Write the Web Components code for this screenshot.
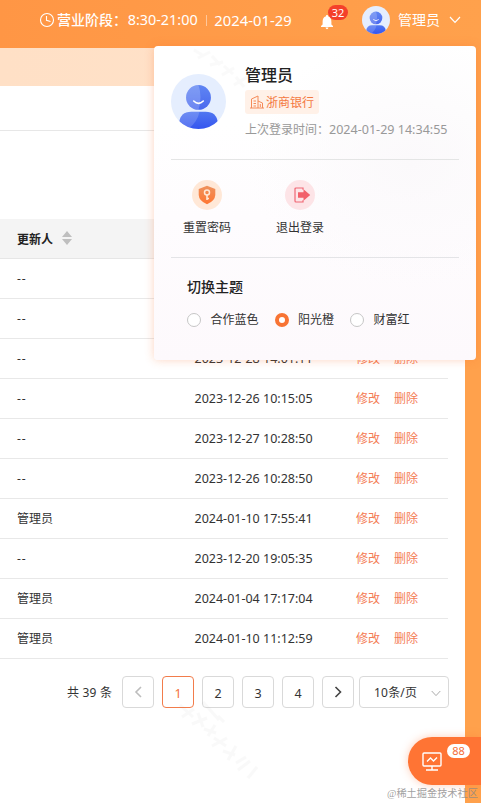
<!DOCTYPE html>
<html lang="zh-CN">
<head>
<meta charset="utf-8">
<title>管理后台</title>
<style>
html,body{margin:0;height:100%;overflow:hidden}
body{font-family:"Noto Sans","Noto Sans CJK SC",sans-serif;font-size:12px;color:#333}
</style>
</head>
<body>
<admin-page></admin-page>
<script>
const define=(name,html)=>customElements.define(name,class extends HTMLElement{
  constructor(){
    super();
    const root=this.attachShadow({mode:'open'});
    const t=document.createElement('template');
    t.innerHTML=typeof html==='function'?html(this):html;
    root.append(t.content.cloneNode(true));
  }
});

define('user-avatar',`<style>:host{display:block;flex:none}svg{display:block;width:100%;height:100%}</style>
<svg viewBox="0 0 54 54"><defs>
<linearGradient id="h" x1="0" y1="0" x2="0" y2="1"><stop stop-color="#5f85f3"/><stop offset="1" stop-color="#4a69ee"/></linearGradient>
<linearGradient id="b" x1="0" y1="0" x2="0" y2="1"><stop stop-color="#5077f1"/><stop offset="1" stop-color="#3555ef"/></linearGradient>
<clipPath id="c"><circle cx="27" cy="27" r="27"/></clipPath></defs>
<circle cx="27" cy="27" r="27" fill="#e5eefe"/>
<g clip-path="url(#c)"><path d="M8 54V48Q9 37 20 37H34Q45 37 46 48V54Z" fill="url(#b)"/><path d="M8 54V48Q9 37 20 37H28Q26 47 17 54Z" fill="#fff" opacity=".17"/></g>
<circle cx="27" cy="23" r="12.2" fill="url(#h)"/><path d="M27 10.8A12.2 12.2 0 0 0 27 35.2Q31 23 27 10.8Z" fill="#fff" opacity=".2"/>
<path d="M22.3 26.5Q27 31 31.7 26.5" fill="none" stroke="#fff" stroke-width="1.6" stroke-linecap="round"/></svg>`);

define('top-bar',`<style>
:host{display:flex;align-items:center;box-sizing:border-box;height:48px;padding:0 20px 8px 39px;color:#fff;font-size:14px;line-height:20px;background:linear-gradient(90deg,#ff9645,#ffa14c);white-space:nowrap}
svg{display:block;flex:none;fill:none;stroke:#fff}
.label{margin-left:2px;width:71px;font-weight:500}.hours{font-size:14.4px;width:72px}
.sep{width:1px;height:11px;background:#ffc79b;margin:0 7px}.date{font-size:14.8px;width:79px}
.bell{position:relative;width:14px;margin-left:27px}
.count{position:absolute;left:8px;top:-6px;width:20px;height:15px;border-radius:8px;background:#f4402b;font-size:11px;line-height:15px;text-align:center}
user-avatar{width:28px;height:28px;margin-left:28px}.name{margin:0 9px 0 8px;width:42px}
</style>
<svg width="16" height="16" viewBox="0 0 16 16" stroke-width="1.1"><circle cx="8" cy="8" r="6.5"/><path d="M7.5 4V8.3L11.5 9.5"/></svg>
<span class="label">营业阶段：</span><span class="hours">8:30-21:00</span><span class="sep"></span><span class="date">2024-01-29</span>
<span class="bell"><svg width="14" height="16" viewBox="0 0 14 16" style="margin-top:3px"><path d="M7 1C8 1 8 1.7 8 2.2C10.5 2.9 11.4 5 11.4 8V10.5L13 12V13H1V12L2.6 10.5V8C2.6 5 3.5 2.9 6 2.2C6 1.7 6 1 7 1ZM5.5 13.6H8.5Q8 15.3 7 15.3T5.5 13.6Z" fill="#fff" stroke="none"/></svg><span class="count">32</span></span>
<user-avatar></user-avatar><span class="name">管理员</span>
<svg width="12" height="8" viewBox="0 0 12 8" stroke-width="1.2"><path d="M1 1L6 6.3L11 1"/></svg>`);

define('table-row',e=>{
  const who=e.getAttribute('who'),time=e.getAttribute('time');
  return `<style>
:host{display:grid;grid-template-columns:194.5px 161.5px 38px 1fr;box-sizing:border-box;height:40px;width:448px;line-height:39px;border-bottom:1px solid #e8e8e8;white-space:nowrap}
.who{padding-left:17px}.none{letter-spacing:.8px}.time{font-size:12.5px}a{color:#f47c55}
</style><span class="who${who==='--'?' none':''}">${who}</span>${time?`<span class="time">${time}</span><a>修改</a><a>删除</a>`:''}`;
});

define('data-table',`<style>
:host{display:block}
header{display:flex;align-items:center;gap:9px;box-sizing:border-box;width:465px;height:40px;padding-left:17px;background:#f4f4f4;border-bottom:1px solid #e6e6e6;color:#222;font-weight:700}
header{width:448px}
svg{fill:#bfbfbf;margin-top:-2px}
</style><header>更新人<svg width="10" height="14" viewBox="0 0 10 14"><path d="M5 0L10 6H0ZM5 14L0 8H10Z"/></svg></header>
${[['--',''],['--',''],['--','2023-12-28 14:01:11'],['--','2023-12-26 10:15:05'],['--','2023-12-27 10:28:50'],['--','2023-12-26 10:28:50'],['管理员','2024-01-10 17:55:41'],['--','2023-12-20 19:05:35'],['管理员','2024-01-04 17:17:04'],['管理员','2024-01-10 11:12:59']].map(r=>`<table-row who="${r[0]}" time="${r[1]}"></table-row>`).join('')}`);

define('page-button',`<style>
:host{display:flex;align-items:center;justify-content:center;box-sizing:border-box;width:32px;height:32px;border:1px solid #d9d9d9;border-radius:4px;font-size:12.5px;line-height:16px;padding-top:3px}
:host([active]){border-color:#f27c4b;color:#f4703c}
::slotted(svg){display:block;margin-top:-4px}
</style><slot></slot>`);

define('table-pager',`<style>
:host{display:flex;align-items:center;gap:8px;height:32px;padding:17px 0 0 67px;white-space:nowrap}
.total{width:47px;letter-spacing:.2px}
svg{fill:none;stroke:#444;stroke-width:1.6}
.size{display:flex;align-items:center;justify-content:space-between;box-sizing:border-box;width:90px;height:32px;margin-left:-3px;padding:0 7px 0 14px;border:1px solid #d9d9d9;border-radius:4px;letter-spacing:.2px}
</style>
<span class="total">共 39 条</span>
<page-button><svg width="10" height="14" viewBox="0 0 10 14" style="stroke:#bdbdbd"><path d="M8 2L3 7L8 12"/></svg></page-button>
<page-button active>1</page-button><page-button>2</page-button><page-button>3</page-button><page-button>4</page-button>
<page-button><svg width="10" height="14" viewBox="0 0 10 14"><path d="M2.5 2L7.5 7L2.5 12"/></svg></page-button>
<span class="size"><span>10条/页</span><svg width="10" height="7" viewBox="0 0 10 7" style="stroke:#aaa;stroke-width:1;margin-top:2px"><path d="M.7 1L5 5.6L9.3 1"/></svg></span>`);

define('quick-action',`<style>
:host{display:flex;flex-direction:column;align-items:center;width:48px;gap:10px;line-height:16px;white-space:nowrap}
.disc{display:flex;align-items:center;justify-content:center;width:30px;height:30px;border-radius:50%;background:var(--disc)}
</style><span class="disc"><slot name="icon"></slot></span><slot></slot>`);

define('theme-option',`<style>
:host{display:flex;align-items:center;gap:9.5px;line-height:16px;white-space:nowrap}
i{box-sizing:border-box;width:14px;height:14px;border:1px solid #c6c6c6;border-radius:50%;background:#fff}
:host([checked]) i{border:4px solid #f87434}
</style><i></i><slot></slot>`);

define('user-panel',`<style>
:host{display:block;box-sizing:border-box;width:322px;height:314px;padding:0 17px;border-radius:4px;background:radial-gradient(ellipse at 80% 37%,#fbf9fb 0,transparent 45%),linear-gradient(180deg,#fff 25%,#fefcfe 55%,#fdf9fc);box-shadow:0 0 10px rgba(248,112,48,.3);white-space:nowrap}
.profile{display:flex;gap:19px;box-sizing:border-box;height:114px;padding-top:18px;border-bottom:1px solid #e4e5e5}
user-avatar{width:55px;height:55px;margin-top:10px}
h1{margin:0;font-size:16px;line-height:22px;font-weight:500;color:#222}
.bank{display:flex;align-items:center;gap:2px;box-sizing:border-box;width:74px;height:24px;margin-top:4px;padding-left:5px;border-radius:3px;background:#fff1e8;color:#f47840}
.last{display:flex;margin-top:8px;line-height:16px;color:#999}.last b{font-weight:400;font-size:12.55px;margin-left:1px}
.last span{width:83px}
.actions{display:flex;gap:45px;box-sizing:border-box;height:98px;padding:20px 12px 0;border-bottom:1px solid #e4e4e7}
quick-action+quick-action{--disc:#fde4e7}quick-action{--disc:#ffe8d7}
h2{margin:19px 0 0 16px;font-size:14px;line-height:20px;font-weight:500;color:#222}
.themes{display:flex;gap:16px;padding:15px 0 0 16px}
.watermark{position:absolute;left:0;top:0;pointer-events:none}
</style>
<svg class="watermark" width="110" height="55" fill="none" stroke="#888" opacity=".035" stroke-width="3"><path d="M40 4l10 6M44 12l12-6M58 10l8 9M56 19l13-3M70 20l9 8M68 29l12-7M82 31l8 10M80 39l13-8"/></svg>
<section class="profile"><user-avatar></user-avatar><div><h1>管理员</h1>
<div class="bank"><svg width="14" height="14" viewBox="0 0 14 14" fill="none" stroke="#f58a58"><path d="M1.5 13V4L8 1V13M0 13H14M8 6L12.5 8V13M3.5 6H6M3.5 8.5H6M3.5 11H6M10.3 9V12"/></svg>浙商银行</div>
<div class="last"><span>上次登录时间：</span><b>2024-01-29 14:34:55</b></div></div></section>
<section class="actions">
<quick-action><svg slot="icon" width="18" height="20" viewBox="0 0 18 20"><defs><linearGradient id="s" x2="0" y2="1"><stop stop-color="#ee925d"/><stop offset="1" stop-color="#ff7631"/></linearGradient></defs><path d="M9 .8L17.3 4V10Q17 16 9 19.2Q1 16 .7 10V4Z" fill="url(#s)"/><circle cx="9" cy="7.5" r="2.5" fill="none" stroke="#ffe7d6" stroke-width="1.5"/><path d="M9 10V15M9 13.5H11" stroke="#ffe7d6" stroke-width="1.6"/></svg>重置密码</quick-action>
<quick-action><svg slot="icon" width="18" height="16" viewBox="0 0 18 16" style="margin-left:3px"><path d="M10 2.8V1H3Q2 1 2 2V14Q2 15 3 15H10V13.2" fill="none" stroke="#f06774" stroke-width="1.2"/><path d="M5 5.2H10.5V2.3L17.2 8L10.5 13.7V10.8H5Z" fill="#f2606a"/></svg>退出登录</quick-action></section>
<h2>切换主题</h2><div class="themes"><theme-option>合作蓝色</theme-option><theme-option checked>阳光橙</theme-option><theme-option>财富红</theme-option></div>`);

define('monitor-button',`<style>
:host{display:flex;box-sizing:border-box;width:73px;height:48px;padding:15px 0 0 14px;border-radius:24px 0 0 24px;background:#ff7434;box-shadow:0 0 8px rgba(255,116,52,.35)}
span{width:23px;height:14px;margin:-8px 0 0 5px;border-radius:7px;background:#fff;color:#f46d38;font-size:11px;line-height:14px;text-align:center}
</style><svg width="20" height="19" viewBox="0 0 20 19" fill="none" stroke="#fff" stroke-width="1.4"><rect x="1" y="1" width="18" height="13" rx="1"/><path d="M5 9.5L8.5 6L11.5 9L15 5.5M10 14V18M4 18H16"/></svg><span>88</span>`);

define('admin-page',`<style>
:host{display:block;position:relative;width:481px;height:803px;overflow:hidden;background:#ffa14c}
main{display:flex;flex-direction:column;width:465px;height:755px;background:#fff}
.tabs{width:465px;height:38px;background:linear-gradient(90deg,#ffe0c6,#ffe2ca)}
.toolbar{height:44px;border-bottom:1px solid #e7e7e7}
data-table{margin-top:88px}
user-panel{position:absolute;left:154px;top:46px}
monitor-button{position:absolute;right:0;top:737px}
.credit{position:absolute;left:387px;top:787px;color:rgba(135,135,135,.8);font:10.2px/14px "Liberation Serif","Noto Sans CJK SC",serif;white-space:nowrap}
.watermark{position:absolute;left:170px;top:695px;pointer-events:none}
</style>
<top-bar></top-bar>
<main><div class="tabs"></div><div class="toolbar"></div><data-table></data-table><table-pager></table-pager></main>
<svg class="watermark" width="95" height="90" fill="none" stroke="#888" opacity=".045" stroke-width="3"><path d="M10 10l13 12M12 22l12-8M28 18l5 14M22 29l15-6M34 34l12 4M38 41l7-11M44 43l12 8M42 51l15-8M53 56l12 4M58 65l8-14M66 68l10-6M68 75l12-9M78 83l9-11M33 7l16 18M48 21l6 6"/></svg>
<user-panel></user-panel><monitor-button></monitor-button><span class="credit">@稀土掘金技术社区</span>`);
</script>
</body>
</html>
